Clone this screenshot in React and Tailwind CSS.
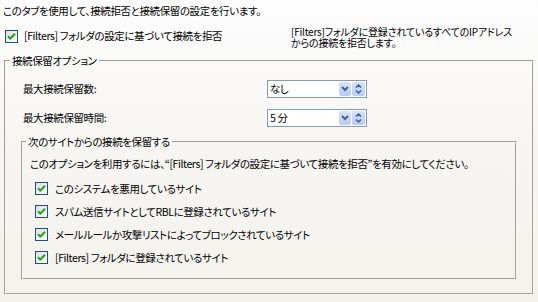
import React from 'react';

const font = { fontFamily: '"MS UI Gothic", "Noto Sans CJK JP", "Liberation Sans", sans-serif' };

const Check = () => (
  <span className="inline-flex h-[13px] w-[13px] shrink-0 items-center justify-center border border-[#1c5180] bg-gradient-to-br from-[#dcdcd7] to-white">
    <svg width="9" height="9" viewBox="0 0 9 9">
      <path d="M1 4.2 L3.3 6.5 L8 1.8" fill="none" stroke="#21a121" strokeWidth="2" />
    </svg>
  </span>
);

const Spin = ({ value }) => (
  <div className="flex h-[18px] w-[100px] shrink-0 items-center border border-[#7f9db9] bg-white">
    <span className="flex-1 pl-[2px] leading-[16px]">{value}</span>
    <span className="mr-[1px] flex h-[14px] w-[12px] items-center justify-center rounded-[2px] bg-gradient-to-b from-[#d7e3fb] to-[#b6cbf5]">
      <svg width="8" height="6" viewBox="0 0 8 6">
        <path d="M1 1 L4 4 L7 1" fill="none" stroke="#4d6185" strokeWidth="2" />
      </svg>
    </span>
    <span className="mr-[1px] flex h-[14px] w-[13px] flex-col items-center justify-center gap-[2px] rounded-[2px] bg-gradient-to-b from-[#d7e3fb] to-[#b6cbf5]">
      <svg width="7" height="4" viewBox="0 0 7 4">
        <path d="M1 3.5 L3.5 1 L6 3.5" fill="none" stroke="#4d6185" strokeWidth="1.6" />
      </svg>
      <svg width="7" height="4" viewBox="0 0 7 4">
        <path d="M1 0.5 L3.5 3 L6 0.5" fill="none" stroke="#4d6185" strokeWidth="1.6" />
      </svg>
    </span>
  </div>
);

const sites = [
  'このシステムを悪用しているサイト',
  'スパム送信サイトとしてRBLに登録されているサイト',
  'メールルールか攻撃リストによってブロックされているサイト',
  '[Filters] フォルダに登録されているサイト',
];

export default function App() {
  return (
    <div
      style={font}
      className="h-[302px] w-[538px] overflow-hidden bg-gradient-to-b from-[#fdfdfe] via-[#f6f5f1] to-[#f3f2ed] text-[10.5px] leading-[14px] tracking-[-0.4px] text-black [font-feature-settings:'palt']"
    >
      <div className="pl-[3px] pt-[4px]">このタブを使用して、接続拒否と接続保留の設定を行います。</div>

      <div className="mt-[8px] flex">
        <div className="flex h-[20px] w-[291px] shrink-0 items-center pl-[5px]">
          <Check />
          <span className="ml-[6px]">[Filters] フォルダの設定に基づいて接続を拒否</span>
        </div>
        <div className="w-[240px] shrink-0 text-[10px] leading-[11px] tracking-[-0.2px]">
          [Filters]フォルダに登録されているすべてのIPアドレス
          <br />
          からの接続を拒否します。
        </div>
      </div>

      <fieldset className="ml-[4px] mt-[6px] h-[241px] w-[530px] border-2 border-[#f6f6ee] [border-style:groove]">
        <legend className="ml-[4px] px-[2px]">接続保留オプション</legend>

        <div className="mt-[12px] flex flex-col gap-[11px]">
          <div className="flex items-center">
            <span className="w-[261px] shrink-0 pl-[17px]">最大接続保留数:</span>
            <Spin value="なし" />
          </div>
          <div className="flex items-center">
            <span className="w-[261px] shrink-0 pl-[17px]">最大接続保留時間:</span>
            <Spin value="5 分" />
          </div>
        </div>

        <fieldset className="ml-[15px] mt-[8px] h-[145px] w-[496px] border-2 border-[#f6f6ee] [border-style:groove]">
          <legend className="ml-[3px] px-[2px]">次のサイトからの接続を保留する</legend>
          <div className="mt-[8px] pl-[7px]">
            このオプションを利用するには、“[Filters] フォルダの設定に基づいて接続を拒否”を有効にしてください。
          </div>
          <div className="mt-[6px] flex flex-col">
            {sites.map((s) => (
              <div key={s} className="flex h-[23px] items-center pl-[12px]">
                <Check />
                <span className="ml-[7px]">{s}</span>
              </div>
            ))}
          </div>
        </fieldset>
      </fieldset>
    </div>
  );
}
